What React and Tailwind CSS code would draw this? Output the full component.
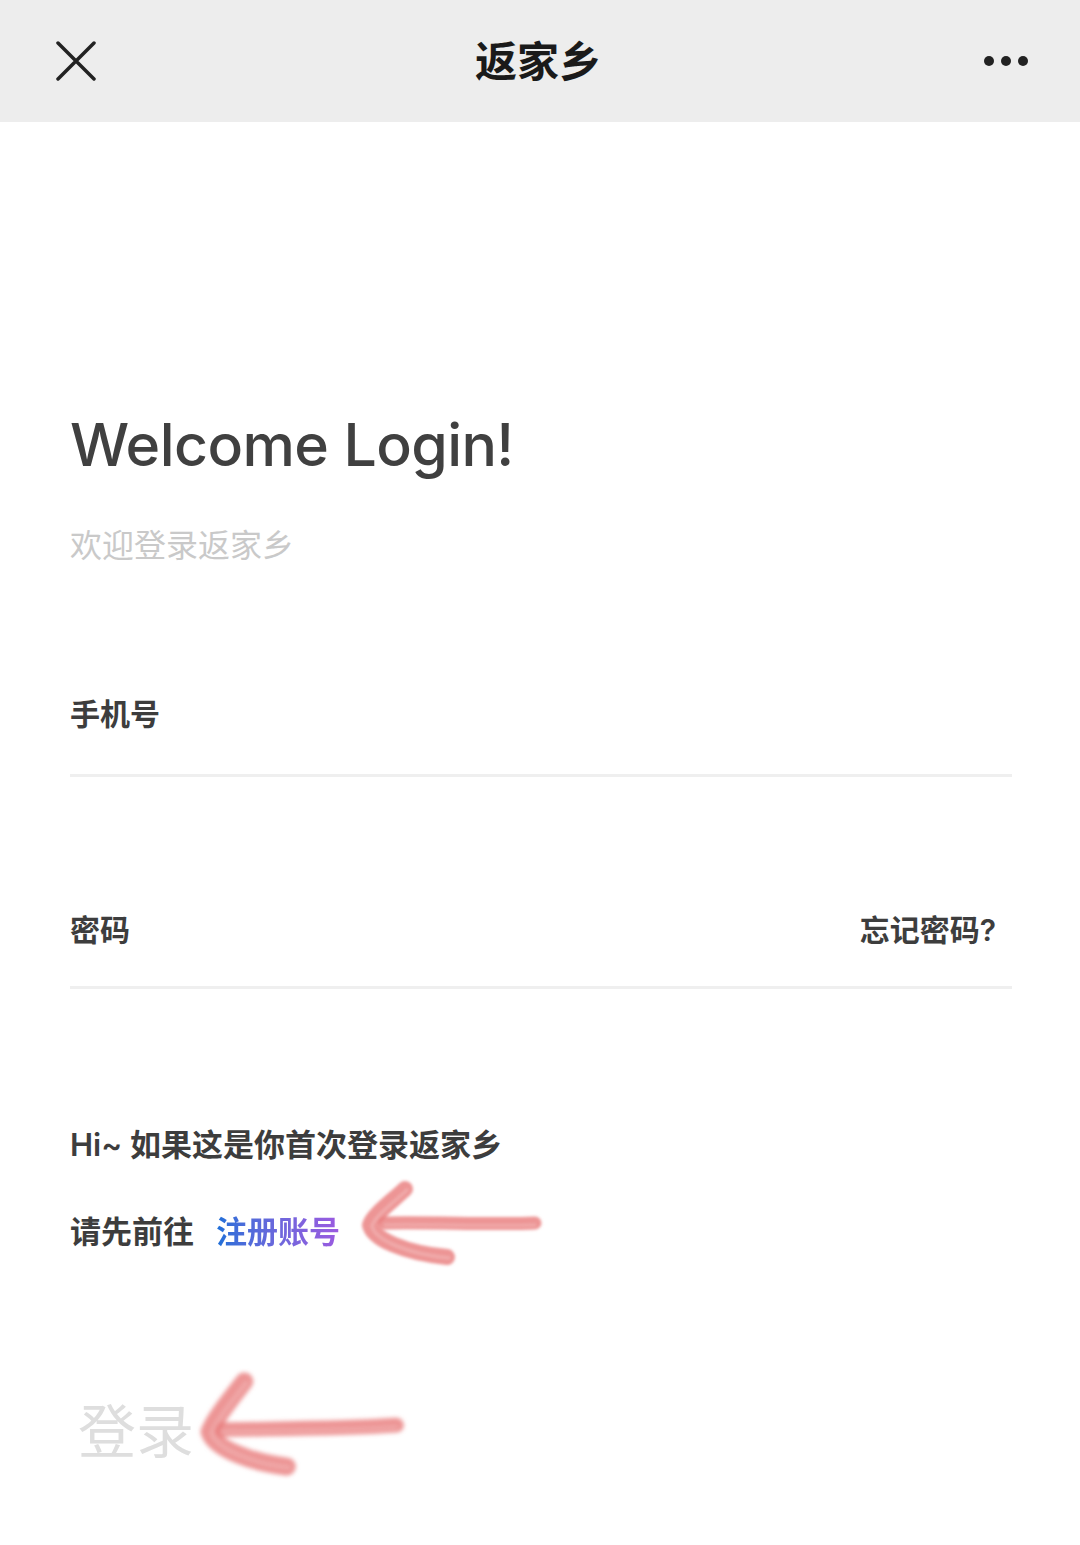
import React from "react";

const CJK = { fontFamily: 'Inter, "Noto Sans CJK SC", sans-serif' };

function Arrow({ className, d1, d2, id }) {
  return (
    <svg className={className} viewBox="0 0 200 100" fill="none">
      <defs>
        <filter id={id} x="-20%" y="-20%" width="140%" height="140%">
          <feGaussianBlur stdDeviation="1.8" />
        </filter>
      </defs>
      <g filter={`url(#${id})`} strokeLinecap="round" strokeLinejoin="round">
        <path d={d1} strokeWidth="16" stroke="#e87b7b" opacity="0.8" />
        <path d={d2} strokeWidth="13" stroke="#e87b7b" opacity="0.8" />
        <path d={d1} strokeWidth="3" stroke="#f6c4c4" opacity="0.5" transform="translate(2 1)" />
        <path d={d2} strokeWidth="2.5" stroke="#f6c4c4" opacity="0.5" transform="translate(0 2)" />
      </g>
    </svg>
  );
}

export default function App() {
  return (
    <div className="w-[1080px] h-[1545px] bg-white relative overflow-hidden" style={CJK}>
      <div className="h-[122px] bg-[#ededed] flex items-center px-[56px]">
        <div className="w-[60px] flex">
          <svg width="40" height="40" viewBox="0 0 40 40">
            <path d="M2 2 L38 38 M38 2 L2 38" stroke="#222" strokeWidth="3.5" strokeLinecap="round" />
          </svg>
        </div>
        <div className="flex-1 text-center text-[42px] font-bold text-[#1a1a1a] pr-[8px]">返家乡</div>
        <div className="w-[60px] flex justify-end gap-[7px] mr-[-4px]">
          <span className="w-[10px] h-[10px] rounded-full bg-[#222]" />
          <span className="w-[10px] h-[10px] rounded-full bg-[#222]" />
          <span className="w-[10px] h-[10px] rounded-full bg-[#222]" />
        </div>
      </div>

      <div className="px-[70px]">
        <div className="pt-[293px] text-[59px] leading-none font-medium text-[#404040] tracking-[-0.6px]" style={{ fontFamily: 'Inter, "Liberation Sans", sans-serif' }}>
          Welcome Login!
        </div>
        <div className="mt-[56px] text-[32px] leading-none text-[#c9c9c9]">欢迎登录返家乡</div>

        <div className="mt-[137px] border-b-[3px] border-[#efefef] w-[942px] pb-[45px]">
          <div className="text-[30px] leading-none font-semibold text-[#3d3d3d]">手机号</div>
        </div>

        <div className="mt-[138px] border-b-[3px] border-[#efefef] w-[942px] pb-[41px] flex justify-between pr-[16px]">
          <div className="text-[30px] leading-none font-semibold text-[#3d3d3d]">密码</div>
          <div className="text-[30px] leading-none font-semibold text-[#3d3d3d]">忘记密码?</div>
        </div>

        <div className="mt-[140px] text-[31px] leading-none font-semibold text-[#3d3d3d]">Hi~ 如果这是你首次登录返家乡</div>
        <div className="mt-[56px] text-[31px] leading-none font-semibold text-[#3d3d3d] flex">
          <span>请先前往</span>
          <span className="ml-[22px] bg-gradient-to-r from-[#1a6fd8] to-[#9b5ae0] bg-clip-text text-transparent">注册账号</span>
        </div>

        <div className="mt-[156px] ml-[8px] text-[58px] leading-none text-[#dedede]">登录</div>
      </div>

      <Arrow
        id="a1"
        className="absolute left-[355px] top-[1175px] w-[200px] h-[100px]"
        d1="M50 14 C35 28 18 40 15 50 C18 64 50 78 92 82"
        d2="M30 48 C80 47 140 50 180 48"
      />
      <Arrow
        id="a2"
        className="absolute left-[190px] top-[1368px] w-[225px] h-[112px]"
        d1="M48 12 C34 30 21 46 17 57 C21 71 52 84 86 88"
        d2="M28 55 C85 54 140 54 184 51"
      />
    </div>
  );
}
